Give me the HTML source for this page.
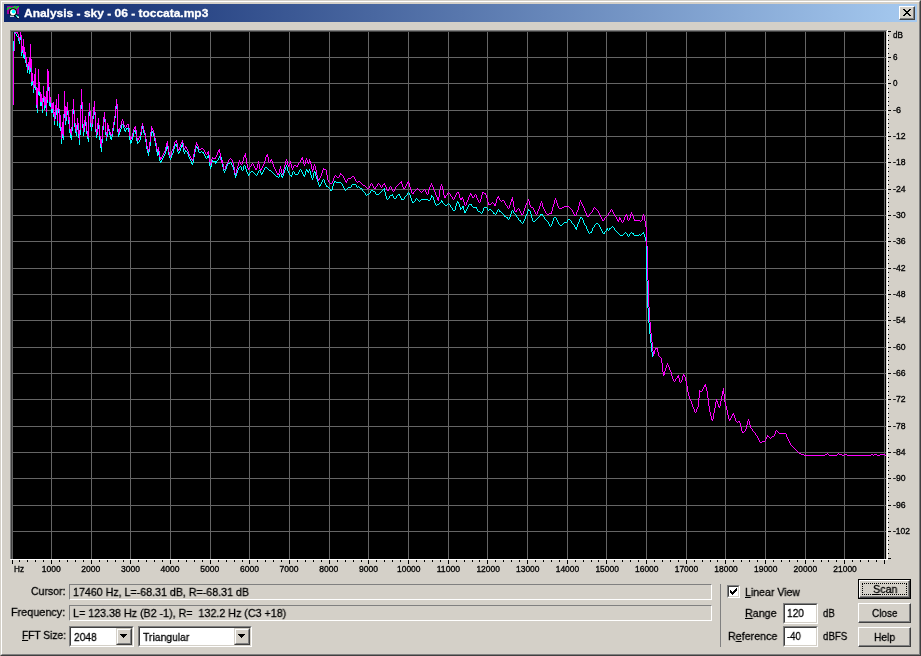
<!DOCTYPE html>
<html><head><meta charset="utf-8"><title>Analysis - sky - 06 - toccata.mp3</title>
<style>
html,body{margin:0;padding:0;}
body{width:921px;height:656px;overflow:hidden;background:#d4d0c8;font-family:"Liberation Sans",sans-serif;font-size:11px;color:#000;position:relative;}
.win{position:absolute;left:0;top:0;width:921px;height:656px;box-sizing:border-box;background:#d4d0c8;
 border-top:1px solid #d4d0c8;border-left:1px solid #d4d0c8;border-right:1px solid #404040;border-bottom:1px solid #404040;}
.win2{position:absolute;left:1px;top:1px;width:919px;height:654px;box-sizing:border-box;
 border-top:1px solid #fff;border-left:1px solid #fff;border-right:1px solid #808080;border-bottom:1px solid #808080;}
.title{position:absolute;left:4px;top:4px;width:913px;height:18px;background:linear-gradient(to right,#0a246a,#a6caf0);}
.title .txt{position:absolute;left:20px;top:2px;color:#fff;font-weight:bold;font-size:11px;line-height:14px;white-space:nowrap;letter-spacing:0.35px;}
.closeb{position:absolute;left:899px;top:6px;width:16px;height:14px;box-sizing:border-box;background:#d4d0c8;
 border-top:1px solid #fff;border-left:1px solid #fff;border-right:1px solid #404040;border-bottom:1px solid #404040;}
.closeb i{position:absolute;left:0;top:0;right:0;bottom:0;border-right:1px solid #808080;border-bottom:1px solid #808080;}
.chart{position:absolute;left:0;top:0;}
.lbl{position:absolute;white-space:nowrap;line-height:13px;height:13px;}
.field{position:absolute;box-sizing:border-box;border-top:1px solid #808080;border-left:1px solid #808080;border-right:1px solid #fff;border-bottom:1px solid #fff;white-space:pre;line-height:13px;padding:0 0 0 2px;}
.edit{position:absolute;box-sizing:border-box;background:#fff;border-top:1px solid #808080;border-left:1px solid #808080;border-right:1px solid #fff;border-bottom:1px solid #fff;}
.edit>b{position:absolute;left:0;top:0;right:0;bottom:0;border-top:1px solid #404040;border-left:1px solid #404040;border-right:1px solid #d4d0c8;border-bottom:1px solid #d4d0c8;font-weight:normal;}
.edit span{position:absolute;left:3px;top:3px;line-height:13px;white-space:nowrap;}
.btn{position:absolute;box-sizing:border-box;background:#d4d0c8;border-top:1px solid #fff;border-left:1px solid #fff;border-right:1px solid #404040;border-bottom:1px solid #404040;text-align:center;}
.btn>b{position:absolute;left:0;top:0;right:0;bottom:0;border-right:1px solid #808080;border-bottom:1px solid #808080;font-weight:normal;line-height:16px;}
.dd{position:absolute;top:1px;right:1px;width:16px;bottom:1px;box-sizing:border-box;background:#d4d0c8;border-top:1px solid #d4d0c8;border-left:1px solid #d4d0c8;border-right:1px solid #404040;border-bottom:1px solid #404040;}
.dd i{position:absolute;left:0;top:0;right:0;bottom:0;border-top:1px solid #fff;border-left:1px solid #fff;border-right:1px solid #808080;border-bottom:1px solid #808080;}
.dd svg{position:absolute;left:3px;top:5px;}
.t{will-change:transform;-webkit-text-stroke-width:0.3px;position:absolute;white-space:pre;font-size:11.5px;line-height:13px;height:13px;transform-origin:0 0;}
u{text-decoration:underline;}
</style></head><body>
<div class="win"></div><div class="win2"></div>
<div class="title">
 <svg style="position:absolute;left:2px;top:1px" width="16" height="16" viewBox="0 0 16 16">
  <rect x="1" y="1" width="12" height="8" fill="#a000a0" shape-rendering="crispEdges"/>
  <path d="M1.5 4.5v-1h1v-1h2v1h1v1h1.5 M6.5 3.5v-1h2v-1h1.5 M9 3.5h1.5v-1h1v-1h1" fill="none" stroke="#00e020" stroke-width="1" shape-rendering="crispEdges"/>
  <circle cx="7" cy="7.2" r="3.9" fill="#000"/>
  <circle cx="7" cy="7.2" r="2.9" fill="#fff"/>
  <circle cx="7.6" cy="6.6" r="1.9" fill="#00ffff"/>
  <path d="M9.6 10 L12.8 13.2" stroke="#000" stroke-width="2.6"/>
  <path d="M9.9 10.1 L12.6 12.8" stroke="#00ffff" stroke-width="1.3"/>
  <path d="M11.5 11.5 L12.8 12.8" stroke="#fff" stroke-width="1.3"/>
  <rect x="4" y="10.6" width="4" height="1.2" fill="#fff"/>
 </svg>
</div>
<div class="closeb"><i></i>
 <svg style="position:absolute;left:3px;top:2px" width="8" height="7" viewBox="0 0 8 7" shape-rendering="crispEdges"><path d="M0 0h2v1h-2zM6 0h2v1h-2zM1 1h2v1h-2zM5 1h2v1h-2zM2 2h4v1h-4zM3 3h2v1h-2zM2 4h4v1h-4zM1 5h2v1h-2zM5 5h2v1h-2zM0 6h2v1h-2zM6 6h2v1h-2z" fill="#000"/></svg>
</div>
<svg class="chart" style="will-change:transform" width="921" height="656" viewBox="0 0 921 656">
<g shape-rendering="crispEdges">
<rect x="10" y="30" width="878" height="530" fill="#fff"/>
<rect x="10" y="30" width="877" height="529" fill="#808080"/>
<rect x="11" y="31" width="876" height="528" fill="#d4d0c8"/>
<rect x="11" y="31" width="875" height="528" fill="#404040"/>
<rect x="12" y="32" width="874" height="527" fill="#000"/>
</g>
<g fill="#656565" shape-rendering="crispEdges">
<rect x="12" y="32" width="1" height="527"/>
<rect x="51" y="32" width="1" height="527"/>
<rect x="91" y="32" width="1" height="527"/>
<rect x="130" y="32" width="1" height="527"/>
<rect x="170" y="32" width="1" height="527"/>
<rect x="210" y="32" width="1" height="527"/>
<rect x="249" y="32" width="1" height="527"/>
<rect x="289" y="32" width="1" height="527"/>
<rect x="329" y="32" width="1" height="527"/>
<rect x="368" y="32" width="1" height="527"/>
<rect x="408" y="32" width="1" height="527"/>
<rect x="448" y="32" width="1" height="527"/>
<rect x="487" y="32" width="1" height="527"/>
<rect x="527" y="32" width="1" height="527"/>
<rect x="567" y="32" width="1" height="527"/>
<rect x="606" y="32" width="1" height="527"/>
<rect x="646" y="32" width="1" height="527"/>
<rect x="686" y="32" width="1" height="527"/>
<rect x="725" y="32" width="1" height="527"/>
<rect x="765" y="32" width="1" height="527"/>
<rect x="805" y="32" width="1" height="527"/>
<rect x="844" y="32" width="1" height="527"/>
<rect x="884" y="32" width="1" height="527"/>
<rect x="12" y="57" width="874" height="1"/>
<rect x="12" y="83" width="874" height="1"/>
<rect x="12" y="110" width="874" height="1"/>
<rect x="12" y="136" width="874" height="1"/>
<rect x="12" y="162" width="874" height="1"/>
<rect x="12" y="189" width="874" height="1"/>
<rect x="12" y="215" width="874" height="1"/>
<rect x="12" y="241" width="874" height="1"/>
<rect x="12" y="268" width="874" height="1"/>
<rect x="12" y="294" width="874" height="1"/>
<rect x="12" y="320" width="874" height="1"/>
<rect x="12" y="347" width="874" height="1"/>
<rect x="12" y="373" width="874" height="1"/>
<rect x="12" y="399" width="874" height="1"/>
<rect x="12" y="426" width="874" height="1"/>
<rect x="12" y="452" width="874" height="1"/>
<rect x="12" y="478" width="874" height="1"/>
<rect x="12" y="505" width="874" height="1"/>
<rect x="12" y="531" width="874" height="1"/>
</g>
<g shape-rendering="crispEdges">
<path fill="#00ffff" d="M13 41h1v11h-1zM14 32h1v9h-1zM15 33h1v1h-1zM16 34h1v2h-1zM17 36h1v1h-1zM18 37h1v4h-1zM19 40h1v4h-1zM20 35h1v5h-1zM21 38h1v18h-1zM22 49h1v4h-1zM23 44h1v14h-1zM24 51h1v8h-1zM25 56h1v7h-1zM26 61h1v6h-1zM27 67h1v6h-1zM28 65h1v5h-1zM29 61h1v13h-1zM30 47h1v25h-1zM31 63h1v23h-1zM32 77h1v8h-1zM33 85h1v8h-1zM34 78h1v10h-1zM35 72h1v18h-1zM36 90h1v18h-1zM37 91h1v22h-1zM38 73h1v22h-1zM39 86h1v10h-1zM40 96h1v10h-1zM41 99h1v7h-1zM42 102h1v11h-1zM43 91h1v11h-1zM44 100h1v10h-1zM45 101h1v7h-1zM46 95h1v21h-1zM47 74h1v29h-1zM48 75h1v16h-1zM49 91h1v15h-1zM50 101h1v6h-1zM51 107h1v6h-1zM52 108h1v5h-1zM53 106h1v11h-1zM54 116h1v9h-1zM55 108h1v11h-1zM56 103h1v12h-1zM57 112h1v14h-1zM58 98h1v15h-1zM59 113h1v15h-1zM60 119h1v12h-1zM61 131h1v13h-1zM62 127h1v11h-1zM63 118h1v22h-1zM64 95h1v23h-1zM65 110h1v15h-1zM66 112h1v9h-1zM67 107h1v8h-1zM68 115h1v9h-1zM69 121h1v12h-1zM70 133h1v5h-1zM71 131h1v9h-1zM72 113h1v18h-1zM73 104h1v10h-1zM74 114h1v13h-1zM75 127h1v6h-1zM76 130h1v6h-1zM77 123h1v7h-1zM78 127h1v11h-1zM79 135h1v10h-1zM80 109h1v26h-1zM81 93h1v16h-1zM82 106h1v22h-1zM83 128h1v8h-1zM84 124h1v8h-1zM85 120h1v6h-1zM86 126h1v8h-1zM87 134h1v5h-1zM88 116h1v26h-1zM89 107h1v9h-1zM90 115h1v12h-1zM91 127h1v4h-1zM92 119h1v8h-1zM93 110h1v9h-1zM94 105h1v10h-1zM95 115h1v17h-1zM96 132h1v6h-1zM97 127h1v8h-1zM98 122h1v7h-1zM99 129h1v11h-1zM100 140h1v8h-1zM101 143h1v9h-1zM102 130h1v13h-1zM103 120h1v10h-1zM104 116h1v6h-1zM105 122h1v13h-1zM106 135h1v6h-1zM107 127h1v10h-1zM108 129h1v2h-1zM109 131h1v4h-1zM110 135h1v4h-1zM111 137h1v3h-1zM112 131h1v6h-1zM113 125h1v6h-1zM114 118h1v7h-1zM115 109h1v9h-1zM116 103h1v6h-1zM117 107h1v25h-1zM118 132h1v5h-1zM119 132h1v3h-1zM120 129h1v3h-1zM121 125h1v4h-1zM122 124h1v1h-1zM123 125h1v3h-1zM124 128h1v3h-1zM125 130h1v2h-1zM126 128h1v2h-1zM127 128h1v1h-1zM128 128h1v4h-1zM129 132h1v8h-1zM130 140h1v4h-1zM131 140h1v3h-1zM132 137h1v3h-1zM133 132h1v5h-1zM134 130h1v2h-1zM135 129h1v5h-1zM136 133h1v8h-1zM137 141h1v3h-1zM138 142h1v1h-1zM139 140h1v2h-1zM140 135h1v5h-1zM141 129h1v6h-1zM142 126h1v3h-1zM143 129h1v4h-1zM144 133h1v2h-1zM145 135h1v7h-1zM146 142h1v7h-1zM147 149h1v4h-1zM148 152h1v4h-1zM149 146h1v6h-1zM150 136h1v10h-1zM151 130h1v6h-1zM152 131h1v2h-1zM153 133h1v3h-1zM154 136h1v5h-1zM155 141h1v5h-1zM156 146h1v6h-1zM157 152h1v4h-1zM158 151h1v4h-1zM159 155h1v6h-1zM160 161h1v2h-1zM161 160h1v2h-1zM162 158h1v2h-1zM163 156h1v2h-1zM164 154h1v2h-1zM165 151h1v3h-1zM166 147h1v4h-1zM167 144h1v5h-1zM168 149h1v6h-1zM169 155h1v3h-1zM170 158h1v2h-1zM171 155h1v3h-1zM172 153h1v2h-1zM173 149h1v4h-1zM174 146h1v3h-1zM175 144h1v2h-1zM176 144h1v3h-1zM177 147h1v5h-1zM178 152h1v2h-1zM179 151h1v2h-1zM180 148h1v3h-1zM181 145h1v3h-1zM182 143h1v4h-1zM183 147h1v5h-1zM184 152h1v2h-1zM185 150h1v2h-1zM186 151h1v1h-1zM187 152h1v2h-1zM188 154h1v3h-1zM189 157h1v2h-1zM190 159h1v2h-1zM191 161h1v3h-1zM192 163h1v2h-1zM193 157h1v6h-1zM194 152h1v5h-1zM195 148h1v4h-1zM196 146h1v2h-1zM197 147h1v2h-1zM198 149h1v3h-1zM199 152h1v1h-1zM200 152h1v1h-1zM201 151h1v1h-1zM202 152h1v1h-1zM203 152h1v2h-1zM204 154h1v2h-1zM205 156h1v2h-1zM206 158h1v1h-1zM207 156h1v2h-1zM208 155h1v3h-1zM209 158h1v8h-1zM210 166h1v3h-1zM211 162h1v5h-1zM212 160h1v2h-1zM213 161h1v1h-1zM214 161h1v1h-1zM215 161h1v3h-1zM216 161h1v2h-1zM217 160h1v1h-1zM218 158h1v2h-1zM219 156h1v2h-1zM220 155h1v2h-1zM221 157h1v5h-1zM222 162h1v5h-1zM223 167h1v4h-1zM224 171h1v2h-1zM225 169h1v2h-1zM226 166h1v3h-1zM227 164h1v2h-1zM228 163h1v1h-1zM229 163h1v1h-1zM230 162h1v1h-1zM231 163h1v2h-1zM232 165h1v2h-1zM233 167h1v3h-1zM234 170h1v5h-1zM235 175h1v3h-1zM236 173h1v3h-1zM237 170h1v3h-1zM238 168h1v2h-1zM239 167h1v1h-1zM240 166h1v1h-1zM241 167h1v3h-1zM242 170h1v1h-1zM243 166h1v4h-1zM244 165h1v1h-1zM245 166h1v3h-1zM246 169h1v3h-1zM247 172h1v2h-1zM248 174h1v2h-1zM249 173h1v2h-1zM250 172h1v1h-1zM251 171h1v1h-1zM252 171h1v1h-1zM253 172h1v1h-1zM254 173h1v1h-1zM255 174h1v1h-1zM256 175h1v1h-1zM257 173h1v2h-1zM258 171h1v2h-1zM259 170h1v1h-1zM260 171h1v2h-1zM261 173h1v2h-1zM262 172h1v2h-1zM263 170h1v2h-1zM264 168h1v2h-1zM265 167h1v1h-1zM266 167h1v1h-1zM267 168h1v1h-1zM268 169h1v1h-1zM269 170h1v1h-1zM270 170h1v1h-1zM271 171h1v1h-1zM272 172h1v1h-1zM273 173h1v1h-1zM274 174h1v1h-1zM275 175h1v1h-1zM276 176h1v1h-1zM277 176h1v1h-1zM278 177h1v1h-1zM279 174h1v3h-1zM280 173h1v1h-1zM281 174h1v3h-1zM282 176h1v2h-1zM283 173h1v3h-1zM284 170h1v3h-1zM285 167h1v3h-1zM286 165h1v2h-1zM287 167h1v4h-1zM288 171h1v2h-1zM289 173h1v2h-1zM290 175h1v1h-1zM291 175h1v2h-1zM292 172h1v3h-1zM293 171h1v1h-1zM294 172h1v2h-1zM295 174h1v1h-1zM296 174h1v1h-1zM297 174h1v1h-1zM298 172h1v2h-1zM299 170h1v2h-1zM300 169h1v1h-1zM301 170h1v2h-1zM302 172h1v2h-1zM303 174h1v2h-1zM304 175h1v2h-1zM305 171h1v4h-1zM306 169h1v2h-1zM307 170h1v2h-1zM308 171h1v2h-1zM309 169h1v2h-1zM310 171h1v4h-1zM311 175h1v3h-1zM312 178h1v2h-1zM313 173h1v5h-1zM314 171h1v2h-1zM315 172h1v4h-1zM316 176h1v3h-1zM317 179h1v3h-1zM318 182h1v3h-1zM319 185h1v2h-1zM320 184h1v2h-1zM321 182h1v2h-1zM322 180h1v2h-1zM323 179h1v1h-1zM324 180h1v3h-1zM325 183h1v2h-1zM326 185h1v2h-1zM327 186h1v1h-1zM328 187h1v1h-1zM329 188h1v1h-1zM330 189h1v2h-1zM331 190h1v1h-1zM332 186h1v4h-1zM333 183h1v3h-1zM334 181h1v2h-1zM335 181h1v1h-1zM336 182h1v1h-1zM337 182h1v1h-1zM338 182h1v1h-1zM339 182h1v1h-1zM340 182h1v1h-1zM341 183h1v1h-1zM342 184h1v2h-1zM343 186h1v2h-1zM344 188h1v2h-1zM345 190h1v1h-1zM346 189h1v1h-1zM347 188h1v1h-1zM348 187h1v1h-1zM349 187h1v1h-1zM350 187h1v1h-1zM351 185h1v2h-1zM352 184h1v1h-1zM353 184h1v1h-1zM354 184h1v1h-1zM355 184h1v1h-1zM356 185h1v2h-1zM357 187h1v1h-1zM358 186h1v1h-1zM359 187h1v1h-1zM360 188h1v1h-1zM361 188h1v1h-1zM362 189h1v2h-1zM363 191h1v1h-1zM364 192h1v1h-1zM365 193h1v2h-1zM366 195h1v1h-1zM367 194h1v1h-1zM368 194h1v1h-1zM369 193h1v1h-1zM370 191h1v2h-1zM371 190h1v1h-1zM372 190h1v1h-1zM373 191h1v1h-1zM374 191h1v1h-1zM375 192h1v2h-1zM376 194h1v1h-1zM377 194h1v1h-1zM378 194h1v1h-1zM379 193h1v1h-1zM380 192h1v1h-1zM381 191h1v1h-1zM382 190h1v1h-1zM383 189h1v1h-1zM384 188h1v4h-1zM385 192h1v4h-1zM386 196h1v3h-1zM387 199h1v1h-1zM388 198h1v1h-1zM389 196h1v2h-1zM390 195h1v1h-1zM391 195h1v1h-1zM392 194h1v2h-1zM393 196h1v2h-1zM394 198h1v1h-1zM395 198h1v1h-1zM396 196h1v2h-1zM397 195h1v1h-1zM398 194h1v1h-1zM399 194h1v2h-1zM400 196h1v2h-1zM401 198h1v2h-1zM402 199h1v1h-1zM403 199h1v1h-1zM404 197h1v2h-1zM405 196h1v1h-1zM406 195h1v1h-1zM407 193h1v2h-1zM408 192h1v1h-1zM409 193h1v2h-1zM410 195h1v3h-1zM411 198h1v3h-1zM412 201h1v2h-1zM413 202h1v1h-1zM414 201h1v1h-1zM415 199h1v2h-1zM416 198h1v1h-1zM417 199h1v1h-1zM418 200h1v1h-1zM419 201h1v1h-1zM420 200h1v1h-1zM421 199h1v1h-1zM422 199h1v1h-1zM423 199h1v1h-1zM424 199h1v1h-1zM425 199h1v1h-1zM426 199h1v1h-1zM427 199h1v1h-1zM428 200h1v1h-1zM429 200h1v1h-1zM430 198h1v2h-1zM431 195h1v3h-1zM432 196h1v1h-1zM433 197h1v3h-1zM434 200h1v3h-1zM435 203h1v2h-1zM436 205h1v1h-1zM437 204h1v1h-1zM438 204h1v1h-1zM439 203h1v1h-1zM440 202h1v1h-1zM441 200h1v2h-1zM442 201h1v2h-1zM443 203h1v1h-1zM444 204h1v1h-1zM445 205h1v1h-1zM446 205h1v1h-1zM447 204h1v1h-1zM448 203h1v1h-1zM449 204h1v1h-1zM450 205h1v2h-1zM451 207h1v1h-1zM452 208h1v2h-1zM453 210h1v1h-1zM454 210h1v1h-1zM455 206h1v4h-1zM456 203h1v3h-1zM457 201h1v2h-1zM458 202h1v2h-1zM459 204h1v3h-1zM460 207h1v3h-1zM461 208h1v1h-1zM462 206h1v2h-1zM463 206h1v4h-1zM464 210h1v3h-1zM465 211h1v2h-1zM466 209h1v2h-1zM467 207h1v2h-1zM468 205h1v2h-1zM469 204h1v1h-1zM470 204h1v1h-1zM471 204h1v2h-1zM472 206h1v1h-1zM473 207h1v1h-1zM474 207h1v1h-1zM475 207h1v1h-1zM476 207h1v2h-1zM477 209h1v2h-1zM478 211h1v1h-1zM479 211h1v1h-1zM480 212h1v1h-1zM481 213h1v1h-1zM482 211h1v2h-1zM483 208h1v3h-1zM484 207h1v1h-1zM485 207h1v1h-1zM486 207h1v1h-1zM487 208h1v2h-1zM488 210h1v1h-1zM489 209h1v1h-1zM490 209h1v1h-1zM491 210h1v1h-1zM492 211h1v1h-1zM493 212h1v2h-1zM494 213h1v1h-1zM495 214h1v1h-1zM496 212h1v2h-1zM497 210h1v2h-1zM498 209h1v1h-1zM499 210h1v2h-1zM500 211h1v1h-1zM501 212h1v1h-1zM502 213h1v1h-1zM503 214h1v1h-1zM504 215h1v2h-1zM505 216h1v1h-1zM506 217h1v1h-1zM507 217h1v2h-1zM508 219h1v1h-1zM509 217h1v2h-1zM510 214h1v3h-1zM511 211h1v3h-1zM512 210h1v1h-1zM513 211h1v2h-1zM514 213h1v1h-1zM515 214h1v1h-1zM516 215h1v2h-1zM517 217h1v1h-1zM518 218h1v2h-1zM519 220h1v1h-1zM520 220h1v2h-1zM521 222h1v1h-1zM522 223h1v1h-1zM523 221h1v2h-1zM524 219h1v2h-1zM525 216h1v3h-1zM526 214h1v2h-1zM527 211h1v3h-1zM528 209h1v2h-1zM529 210h1v1h-1zM530 211h1v3h-1zM531 214h1v4h-1zM532 218h1v3h-1zM533 221h1v1h-1zM534 221h1v1h-1zM535 220h1v1h-1zM536 219h1v1h-1zM537 218h1v1h-1zM538 217h1v1h-1zM539 216h1v1h-1zM540 214h1v2h-1zM541 214h1v1h-1zM542 214h1v2h-1zM543 216h1v1h-1zM544 217h1v2h-1zM545 219h1v1h-1zM546 220h1v1h-1zM547 221h1v1h-1zM548 222h1v2h-1zM549 224h1v2h-1zM550 226h1v1h-1zM551 224h1v2h-1zM552 221h1v3h-1zM553 218h1v3h-1zM554 217h1v1h-1zM555 217h1v1h-1zM556 218h1v2h-1zM557 220h1v2h-1zM558 222h1v2h-1zM559 224h1v1h-1zM560 225h1v1h-1zM561 225h1v1h-1zM562 224h1v1h-1zM563 223h1v1h-1zM564 222h1v1h-1zM565 222h1v1h-1zM566 222h1v1h-1zM567 220h1v2h-1zM568 219h1v1h-1zM569 219h1v1h-1zM570 220h1v1h-1zM571 221h1v2h-1zM572 223h1v1h-1zM573 224h1v1h-1zM574 225h1v2h-1zM575 227h1v2h-1zM576 227h1v3h-1zM577 224h1v3h-1zM578 222h1v2h-1zM579 219h1v3h-1zM580 217h1v2h-1zM581 217h1v1h-1zM582 218h1v2h-1zM583 220h1v3h-1zM584 223h1v2h-1zM585 225h1v1h-1zM586 226h1v3h-1zM587 229h1v2h-1zM588 231h1v2h-1zM589 233h1v1h-1zM590 232h1v1h-1zM591 231h1v2h-1zM592 228h1v3h-1zM593 227h1v1h-1zM594 225h1v2h-1zM595 224h1v1h-1zM596 223h1v1h-1zM597 223h1v1h-1zM598 224h1v1h-1zM599 225h1v2h-1zM600 227h1v2h-1zM601 229h1v2h-1zM602 231h1v2h-1zM603 233h1v1h-1zM604 232h1v2h-1zM605 231h1v1h-1zM606 229h1v2h-1zM607 228h1v2h-1zM608 230h1v1h-1zM609 228h1v2h-1zM610 228h1v1h-1zM611 227h1v1h-1zM612 226h1v1h-1zM613 227h1v1h-1zM614 228h1v2h-1zM615 230h1v1h-1zM616 231h1v1h-1zM617 232h1v1h-1zM618 233h1v1h-1zM619 234h1v1h-1zM620 235h1v1h-1zM621 235h1v1h-1zM622 235h1v1h-1zM623 234h1v1h-1zM624 233h1v1h-1zM625 232h1v1h-1zM626 233h1v1h-1zM627 234h1v2h-1zM628 236h1v1h-1zM629 234h1v2h-1zM630 233h1v1h-1zM631 232h1v1h-1zM632 233h1v1h-1zM633 233h1v2h-1zM634 235h1v1h-1zM635 235h1v1h-1zM636 235h1v1h-1zM637 235h1v1h-1zM638 235h1v1h-1zM639 234h1v1h-1zM640 235h1v1h-1zM641 234h1v1h-1zM642 233h1v1h-1zM643 232h1v2h-1zM644 234h1v3h-1zM645 237h1v4h-1zM646 231h1v50h-1zM647 281h1v27h-1zM648 308h1v15h-1zM649 323h1v11h-1zM650 334h1v9h-1zM651 343h1v9h-1zM652 352h1v5h-1z"/>
<path fill="#ff00ff" d="M13 51h1v54h-1zM14 33h1v18h-1zM15 32h1v1h-1zM16 32h1v1h-1zM17 32h1v2h-1zM18 34h1v4h-1zM19 37h1v4h-1zM20 32h1v5h-1zM21 35h1v17h-1zM22 46h1v4h-1zM23 39h1v15h-1zM24 47h1v8h-1zM25 52h1v8h-1zM26 57h1v7h-1zM27 64h1v6h-1zM28 62h1v4h-1zM29 57h1v13h-1zM30 44h1v24h-1zM31 59h1v23h-1zM32 73h1v8h-1zM33 81h1v8h-1zM34 74h1v11h-1zM35 68h1v19h-1zM36 87h1v18h-1zM37 88h1v21h-1zM38 69h1v22h-1zM39 82h1v10h-1zM40 92h1v10h-1zM41 94h1v8h-1zM42 98h1v11h-1zM43 86h1v12h-1zM44 96h1v10h-1zM45 97h1v8h-1zM46 91h1v21h-1zM47 69h1v31h-1zM48 71h1v16h-1zM49 87h1v15h-1zM50 97h1v6h-1zM51 103h1v6h-1zM52 103h1v6h-1zM53 102h1v12h-1zM54 112h1v9h-1zM55 105h1v11h-1zM56 99h1v11h-1zM57 108h1v13h-1zM58 94h1v15h-1zM59 109h1v14h-1zM60 115h1v12h-1zM61 127h1v12h-1zM62 122h1v12h-1zM63 114h1v22h-1zM64 91h1v23h-1zM65 106h1v15h-1zM66 107h1v10h-1zM67 102h1v9h-1zM68 111h1v9h-1zM69 117h1v12h-1zM70 129h1v4h-1zM71 127h1v8h-1zM72 109h1v18h-1zM73 99h1v11h-1zM74 110h1v13h-1zM75 123h1v6h-1zM76 125h1v7h-1zM77 118h1v7h-1zM78 123h1v11h-1zM79 130h1v10h-1zM80 105h1v25h-1zM81 89h1v16h-1zM82 102h1v22h-1zM83 124h1v8h-1zM84 120h1v8h-1zM85 116h1v6h-1zM86 122h1v9h-1zM87 131h1v5h-1zM88 112h1v26h-1zM89 103h1v9h-1zM90 111h1v12h-1zM91 123h1v4h-1zM92 116h1v8h-1zM93 107h1v9h-1zM94 101h1v11h-1zM95 112h1v17h-1zM96 129h1v6h-1zM97 123h1v9h-1zM98 118h1v7h-1zM99 125h1v11h-1zM100 136h1v8h-1zM101 139h1v8h-1zM102 126h1v13h-1zM103 117h1v9h-1zM104 112h1v7h-1zM105 119h1v13h-1zM106 132h1v6h-1zM107 123h1v11h-1zM108 125h1v4h-1zM109 129h1v3h-1zM110 132h1v3h-1zM111 134h1v2h-1zM112 128h1v6h-1zM113 122h1v6h-1zM114 116h1v6h-1zM115 106h1v10h-1zM116 99h1v7h-1zM117 104h1v25h-1zM118 129h1v5h-1zM119 128h1v4h-1zM120 125h1v3h-1zM121 121h1v4h-1zM122 119h1v2h-1zM123 121h1v4h-1zM124 125h1v2h-1zM125 127h1v1h-1zM126 125h1v2h-1zM127 124h1v1h-1zM128 124h1v4h-1zM129 128h1v8h-1zM130 136h1v4h-1zM131 137h1v2h-1zM132 133h1v4h-1zM133 129h1v4h-1zM134 127h1v2h-1zM135 126h1v5h-1zM136 130h1v8h-1zM137 138h1v3h-1zM138 138h1v2h-1zM139 136h1v2h-1zM140 132h1v4h-1zM141 126h1v6h-1zM142 123h1v3h-1zM143 126h1v4h-1zM144 130h1v3h-1zM145 133h1v6h-1zM146 139h1v7h-1zM147 146h1v4h-1zM148 149h1v3h-1zM149 142h1v7h-1zM150 132h1v10h-1zM151 126h1v6h-1zM152 128h1v2h-1zM153 130h1v3h-1zM154 133h1v5h-1zM155 138h1v5h-1zM156 143h1v6h-1zM157 149h1v3h-1zM158 147h1v4h-1zM159 151h1v6h-1zM160 157h1v3h-1zM161 157h1v2h-1zM162 155h1v2h-1zM163 153h1v2h-1zM164 151h1v2h-1zM165 147h1v4h-1zM166 143h1v4h-1zM167 141h1v5h-1zM168 146h1v6h-1zM169 152h1v4h-1zM170 155h1v2h-1zM171 151h1v4h-1zM172 149h1v2h-1zM173 146h1v3h-1zM174 142h1v4h-1zM175 141h1v1h-1zM176 140h1v3h-1zM177 143h1v6h-1zM178 149h1v2h-1zM179 147h1v3h-1zM180 144h1v3h-1zM181 142h1v2h-1zM182 140h1v3h-1zM183 143h1v5h-1zM184 148h1v2h-1zM185 146h1v2h-1zM186 147h1v2h-1zM187 149h1v2h-1zM188 151h1v3h-1zM189 154h1v2h-1zM190 156h1v2h-1zM191 158h1v2h-1zM192 159h1v2h-1zM193 154h1v5h-1zM194 149h1v5h-1zM195 145h1v4h-1zM196 142h1v3h-1zM197 144h1v2h-1zM198 146h1v3h-1zM199 149h1v1h-1zM200 149h1v1h-1zM201 148h1v1h-1zM202 148h1v1h-1zM203 149h1v1h-1zM204 150h1v2h-1zM205 152h1v2h-1zM206 154h1v1h-1zM207 152h1v2h-1zM208 151h1v4h-1zM209 155h1v7h-1zM210 162h1v3h-1zM211 159h1v4h-1zM212 157h1v2h-1zM213 158h1v1h-1zM214 158h1v1h-1zM215 157h1v2h-1zM216 155h1v2h-1zM217 152h1v3h-1zM218 150h1v2h-1zM219 149h1v4h-1zM220 153h1v7h-1zM221 160h1v3h-1zM222 160h1v4h-1zM223 164h1v5h-1zM224 169h1v1h-1zM225 166h1v3h-1zM226 164h1v2h-1zM227 162h1v2h-1zM228 160h1v2h-1zM229 159h1v1h-1zM230 158h1v1h-1zM231 159h1v1h-1zM232 160h1v3h-1zM233 163h1v4h-1zM234 167h1v6h-1zM235 173h1v2h-1zM236 169h1v4h-1zM237 166h1v3h-1zM238 162h1v4h-1zM239 160h1v2h-1zM240 162h1v2h-1zM241 164h1v1h-1zM242 161h1v3h-1zM243 157h1v4h-1zM244 155h1v2h-1zM245 153h1v5h-1zM246 158h1v6h-1zM247 164h1v4h-1zM248 168h1v2h-1zM249 167h1v2h-1zM250 166h1v1h-1zM251 164h1v2h-1zM252 163h1v1h-1zM253 164h1v2h-1zM254 166h1v2h-1zM255 168h1v2h-1zM256 168h1v2h-1zM257 164h1v4h-1zM258 161h1v3h-1zM259 164h1v5h-1zM260 169h1v2h-1zM261 168h1v2h-1zM262 166h1v2h-1zM263 164h1v2h-1zM264 161h1v3h-1zM265 157h1v4h-1zM266 155h1v2h-1zM267 154h1v3h-1zM268 157h1v5h-1zM269 162h1v1h-1zM270 160h1v2h-1zM271 159h1v2h-1zM272 161h1v3h-1zM273 164h1v3h-1zM274 167h1v2h-1zM275 169h1v2h-1zM276 171h1v2h-1zM277 173h1v2h-1zM278 173h1v2h-1zM279 169h1v4h-1zM280 166h1v3h-1zM281 169h1v4h-1zM282 173h1v2h-1zM283 169h1v4h-1zM284 165h1v4h-1zM285 161h1v4h-1zM286 159h1v2h-1zM287 161h1v4h-1zM288 165h1v2h-1zM289 163h1v3h-1zM290 161h1v3h-1zM291 164h1v4h-1zM292 168h1v2h-1zM293 166h1v2h-1zM294 165h1v1h-1zM295 165h1v1h-1zM296 166h1v1h-1zM297 165h1v2h-1zM298 163h1v2h-1zM299 162h1v1h-1zM300 160h1v2h-1zM301 158h1v2h-1zM302 157h1v3h-1zM303 160h1v4h-1zM304 164h1v2h-1zM305 160h1v4h-1zM306 158h1v2h-1zM307 160h1v3h-1zM308 162h1v2h-1zM309 159h1v3h-1zM310 161h1v3h-1zM311 164h1v5h-1zM312 169h1v3h-1zM313 166h1v4h-1zM314 164h1v2h-1zM315 166h1v4h-1zM316 170h1v5h-1zM317 175h1v4h-1zM318 179h1v2h-1zM319 178h1v2h-1zM320 176h1v2h-1zM321 173h1v3h-1zM322 170h1v3h-1zM323 168h1v2h-1zM324 169h1v1h-1zM325 169h1v1h-1zM326 170h1v5h-1zM327 175h1v5h-1zM328 180h1v2h-1zM329 182h1v1h-1zM330 183h1v1h-1zM331 183h1v1h-1zM332 181h1v2h-1zM333 178h1v3h-1zM334 176h1v2h-1zM335 175h1v1h-1zM336 176h1v1h-1zM337 177h1v1h-1zM338 177h1v1h-1zM339 175h1v2h-1zM340 173h1v2h-1zM341 174h1v1h-1zM342 175h1v1h-1zM343 176h1v2h-1zM344 178h1v2h-1zM345 180h1v2h-1zM346 181h1v2h-1zM347 179h1v2h-1zM348 178h1v1h-1zM349 178h1v1h-1zM350 178h1v1h-1zM351 177h1v1h-1zM352 176h1v1h-1zM353 176h1v1h-1zM354 177h1v2h-1zM355 179h1v2h-1zM356 181h1v1h-1zM357 182h1v1h-1zM358 181h1v1h-1zM359 181h1v1h-1zM360 182h1v1h-1zM361 183h1v1h-1zM362 184h1v1h-1zM363 185h1v1h-1zM364 185h1v1h-1zM365 186h1v1h-1zM366 187h1v1h-1zM367 188h1v1h-1zM368 188h1v1h-1zM369 186h1v2h-1zM370 184h1v2h-1zM371 183h1v1h-1zM372 184h1v2h-1zM373 186h1v2h-1zM374 188h1v1h-1zM375 187h1v2h-1zM376 186h1v1h-1zM377 184h1v2h-1zM378 183h1v1h-1zM379 184h1v1h-1zM380 185h1v2h-1zM381 187h1v1h-1zM382 185h1v2h-1zM383 184h1v1h-1zM384 183h1v2h-1zM385 185h1v2h-1zM386 187h1v3h-1zM387 190h1v1h-1zM388 189h1v2h-1zM389 187h1v2h-1zM390 186h1v1h-1zM391 187h1v2h-1zM392 189h1v2h-1zM393 191h1v1h-1zM394 189h1v2h-1zM395 187h1v2h-1zM396 186h1v1h-1zM397 185h1v1h-1zM398 184h1v1h-1zM399 183h1v1h-1zM400 182h1v1h-1zM401 181h1v3h-1zM402 184h1v3h-1zM403 187h1v2h-1zM404 188h1v1h-1zM405 186h1v2h-1zM406 184h1v2h-1zM407 182h1v2h-1zM408 181h1v2h-1zM409 183h1v4h-1zM410 187h1v3h-1zM411 190h1v3h-1zM412 193h1v1h-1zM413 192h1v2h-1zM414 191h1v1h-1zM415 190h1v1h-1zM416 189h1v1h-1zM417 188h1v1h-1zM418 189h1v1h-1zM419 190h1v1h-1zM420 191h1v1h-1zM421 192h1v1h-1zM422 191h1v1h-1zM423 190h1v1h-1zM424 189h1v1h-1zM425 190h1v2h-1zM426 192h1v2h-1zM427 194h1v1h-1zM428 190h1v4h-1zM429 187h1v3h-1zM430 185h1v2h-1zM431 183h1v2h-1zM432 185h1v2h-1zM433 187h1v3h-1zM434 190h1v2h-1zM435 192h1v3h-1zM436 195h1v2h-1zM437 197h1v3h-1zM438 197h1v4h-1zM439 190h1v7h-1zM440 186h1v4h-1zM441 184h1v2h-1zM442 186h1v4h-1zM443 190h1v5h-1zM444 195h1v3h-1zM445 196h1v2h-1zM446 195h1v1h-1zM447 193h1v2h-1zM448 192h1v1h-1zM449 193h1v1h-1zM450 194h1v2h-1zM451 196h1v1h-1zM452 197h1v2h-1zM453 199h1v1h-1zM454 197h1v2h-1zM455 195h1v2h-1zM456 193h1v2h-1zM457 192h1v1h-1zM458 192h1v2h-1zM459 194h1v4h-1zM460 198h1v2h-1zM461 198h1v2h-1zM462 197h1v2h-1zM463 199h1v3h-1zM464 202h1v3h-1zM465 205h1v1h-1zM466 202h1v3h-1zM467 200h1v2h-1zM468 197h1v3h-1zM469 195h1v2h-1zM470 193h1v2h-1zM471 194h1v2h-1zM472 196h1v2h-1zM473 197h1v1h-1zM474 195h1v2h-1zM475 194h1v1h-1zM476 195h1v3h-1zM477 198h1v2h-1zM478 200h1v2h-1zM479 202h1v1h-1zM480 199h1v3h-1zM481 195h1v4h-1zM482 192h1v3h-1zM483 192h1v1h-1zM484 193h1v1h-1zM485 193h1v2h-1zM486 195h1v3h-1zM487 198h1v4h-1zM488 202h1v3h-1zM489 204h1v1h-1zM490 204h1v1h-1zM491 203h1v1h-1zM492 202h1v1h-1zM493 203h1v1h-1zM494 204h1v2h-1zM495 203h1v3h-1zM496 199h1v4h-1zM497 197h1v2h-1zM498 196h1v2h-1zM499 198h1v2h-1zM500 200h1v1h-1zM501 201h1v1h-1zM502 200h1v1h-1zM503 200h1v1h-1zM504 201h1v2h-1zM505 203h1v2h-1zM506 205h1v1h-1zM507 206h1v2h-1zM508 208h1v1h-1zM509 205h1v3h-1zM510 202h1v3h-1zM511 199h1v3h-1zM512 197h1v4h-1zM513 201h1v6h-1zM514 207h1v4h-1zM515 211h1v1h-1zM516 210h1v2h-1zM517 209h1v1h-1zM518 208h1v1h-1zM519 209h1v2h-1zM520 211h1v2h-1zM521 213h1v2h-1zM522 214h1v1h-1zM523 211h1v3h-1zM524 208h1v3h-1zM525 205h1v3h-1zM526 203h1v2h-1zM527 201h1v2h-1zM528 199h1v2h-1zM529 201h1v4h-1zM530 205h1v2h-1zM531 207h1v1h-1zM532 207h1v1h-1zM533 208h1v2h-1zM534 210h1v2h-1zM535 212h1v2h-1zM536 214h1v1h-1zM537 211h1v3h-1zM538 209h1v2h-1zM539 206h1v3h-1zM540 203h1v3h-1zM541 201h1v2h-1zM542 203h1v4h-1zM543 207h1v2h-1zM544 209h1v2h-1zM545 211h1v2h-1zM546 213h1v1h-1zM547 214h1v1h-1zM548 214h1v1h-1zM549 213h1v1h-1zM550 213h1v1h-1zM551 211h1v3h-1zM552 207h1v4h-1zM553 204h1v3h-1zM554 200h1v4h-1zM555 198h1v2h-1zM556 200h1v3h-1zM557 203h1v3h-1zM558 206h1v2h-1zM559 208h1v1h-1zM560 208h1v1h-1zM561 208h1v1h-1zM562 207h1v1h-1zM563 207h1v1h-1zM564 206h1v1h-1zM565 206h1v1h-1zM566 206h1v1h-1zM567 206h1v1h-1zM568 206h1v1h-1zM569 207h1v1h-1zM570 208h1v1h-1zM571 209h1v1h-1zM572 210h1v2h-1zM573 212h1v2h-1zM574 214h1v2h-1zM575 215h1v1h-1zM576 212h1v3h-1zM577 210h1v2h-1zM578 206h1v4h-1zM579 202h1v4h-1zM580 200h1v2h-1zM581 202h1v2h-1zM582 204h1v2h-1zM583 206h1v2h-1zM584 208h1v3h-1zM585 211h1v2h-1zM586 213h1v3h-1zM587 216h1v1h-1zM588 216h1v1h-1zM589 214h1v2h-1zM590 213h1v1h-1zM591 212h1v1h-1zM592 210h1v2h-1zM593 208h1v2h-1zM594 207h1v1h-1zM595 208h1v1h-1zM596 209h1v1h-1zM597 210h1v1h-1zM598 211h1v2h-1zM599 213h1v2h-1zM600 215h1v2h-1zM601 217h1v2h-1zM602 219h1v2h-1zM603 220h1v1h-1zM604 218h1v2h-1zM605 217h1v1h-1zM606 216h1v1h-1zM607 215h1v1h-1zM608 213h1v2h-1zM609 212h1v1h-1zM610 210h1v2h-1zM611 209h1v1h-1zM612 210h1v2h-1zM613 212h1v2h-1zM614 214h1v2h-1zM615 216h1v1h-1zM616 217h1v2h-1zM617 219h1v2h-1zM618 220h1v2h-1zM619 217h1v3h-1zM620 218h1v2h-1zM621 220h1v2h-1zM622 222h1v1h-1zM623 220h1v2h-1zM624 217h1v3h-1zM625 215h1v2h-1zM626 214h1v2h-1zM627 216h1v4h-1zM628 220h1v1h-1zM629 218h1v2h-1zM630 214h1v4h-1zM631 212h1v2h-1zM632 214h1v2h-1zM633 216h1v3h-1zM634 219h1v2h-1zM635 220h1v1h-1zM636 220h1v1h-1zM637 220h1v1h-1zM638 220h1v1h-1zM639 220h1v1h-1zM640 221h1v1h-1zM641 220h1v1h-1zM642 216h1v4h-1zM643 214h1v2h-1zM644 216h1v5h-1zM645 221h1v6h-1zM646 227h1v19h-1zM647 246h1v34h-1zM648 280h1v27h-1zM649 307h1v15h-1zM650 322h1v11h-1zM651 333h1v9h-1zM652 342h1v9h-1zM653 351h1v5h-1zM654 350h1v4h-1zM655 348h1v2h-1zM656 348h1v1h-1zM657 348h1v4h-1zM658 352h1v4h-1zM659 356h1v1h-1zM660 357h1v1h-1zM661 358h1v5h-1zM662 363h1v9h-1zM663 372h1v4h-1zM664 371h1v4h-1zM665 368h1v3h-1zM666 365h1v3h-1zM667 363h1v2h-1zM668 365h1v2h-1zM669 367h1v3h-1zM670 370h1v2h-1zM671 372h1v4h-1zM672 376h1v3h-1zM673 379h1v2h-1zM674 381h1v1h-1zM675 379h1v2h-1zM676 378h1v1h-1zM677 376h1v2h-1zM678 375h1v3h-1zM679 378h1v4h-1zM680 382h1v1h-1zM681 380h1v2h-1zM682 376h1v4h-1zM683 374h1v2h-1zM684 375h1v2h-1zM685 377h1v4h-1zM686 381h1v5h-1zM687 386h1v6h-1zM688 392h1v4h-1zM689 396h1v3h-1zM690 399h1v2h-1zM691 401h1v3h-1zM692 404h1v3h-1zM693 407h1v2h-1zM694 409h1v3h-1zM695 412h1v1h-1zM696 409h1v3h-1zM697 407h1v2h-1zM698 398h1v9h-1zM699 390h1v8h-1zM700 391h1v1h-1zM701 391h1v1h-1zM702 389h1v2h-1zM703 387h1v2h-1zM704 385h1v2h-1zM705 384h1v3h-1zM706 387h1v4h-1zM707 391h1v7h-1zM708 398h1v8h-1zM709 406h1v6h-1zM710 412h1v4h-1zM711 416h1v4h-1zM712 419h1v2h-1zM713 413h1v6h-1zM714 408h1v5h-1zM715 402h1v6h-1zM716 399h1v3h-1zM717 401h1v3h-1zM718 404h1v3h-1zM719 406h1v2h-1zM720 401h1v5h-1zM721 396h1v5h-1zM722 391h1v5h-1zM723 388h1v6h-1zM724 394h1v8h-1zM725 402h1v4h-1zM726 406h1v4h-1zM727 410h1v5h-1zM728 415h1v4h-1zM729 419h1v2h-1zM730 418h1v2h-1zM731 416h1v2h-1zM732 414h1v2h-1zM733 413h1v2h-1zM734 415h1v3h-1zM735 418h1v3h-1zM736 421h1v1h-1zM737 422h1v1h-1zM738 421h1v1h-1zM739 421h1v2h-1zM740 423h1v4h-1zM741 427h1v4h-1zM742 431h1v2h-1zM743 432h1v1h-1zM744 431h1v1h-1zM745 429h1v2h-1zM746 425h1v4h-1zM747 421h1v4h-1zM748 419h1v2h-1zM749 421h1v4h-1zM750 425h1v3h-1zM751 428h1v1h-1zM752 429h1v2h-1zM753 431h1v1h-1zM754 432h1v1h-1zM755 433h1v2h-1zM756 435h1v1h-1zM757 436h1v2h-1zM758 438h1v2h-1zM759 440h1v2h-1zM760 442h1v1h-1zM761 442h1v1h-1zM762 441h1v1h-1zM763 441h1v1h-1zM764 441h1v1h-1zM765 439h1v2h-1zM766 437h1v2h-1zM767 435h1v2h-1zM768 436h1v1h-1zM769 437h1v1h-1zM770 438h1v1h-1zM771 437h1v1h-1zM772 436h1v1h-1zM773 436h1v1h-1zM774 434h1v2h-1zM775 431h1v3h-1zM776 430h1v1h-1zM777 431h1v1h-1zM778 432h1v1h-1zM779 433h1v1h-1zM780 433h1v1h-1zM781 433h1v1h-1zM782 433h1v1h-1zM783 433h1v1h-1zM784 433h1v1h-1zM785 433h1v1h-1zM786 434h1v3h-1zM787 437h1v2h-1zM788 439h1v2h-1zM789 441h1v2h-1zM790 443h1v2h-1zM791 445h1v1h-1zM792 446h1v1h-1zM793 447h1v1h-1zM794 448h1v1h-1zM795 449h1v1h-1zM796 450h1v1h-1zM797 451h1v1h-1zM798 452h1v1h-1zM799 453h1v1h-1zM800 453h1v1h-1zM801 454h1v1h-1zM802 454h1v1h-1zM803 454h1v1h-1zM804 455h1v1h-1zM805 455h1v1h-1zM806 455h1v1h-1zM807 455h1v1h-1zM808 455h1v1h-1zM809 455h1v1h-1zM810 455h1v1h-1zM811 455h1v1h-1zM812 455h1v1h-1zM813 455h1v1h-1zM814 455h1v1h-1zM815 455h1v1h-1zM816 455h1v1h-1zM817 455h1v1h-1zM818 455h1v1h-1zM819 455h1v1h-1zM820 455h1v1h-1zM821 455h1v1h-1zM822 455h1v1h-1zM823 455h1v1h-1zM824 455h1v1h-1zM825 454h1v1h-1zM826 454h1v1h-1zM827 453h1v1h-1zM828 454h1v1h-1zM829 455h1v1h-1zM830 455h1v1h-1zM831 455h1v1h-1zM832 455h1v1h-1zM833 455h1v1h-1zM834 455h1v1h-1zM835 455h1v1h-1zM836 455h1v1h-1zM837 454h1v1h-1zM838 453h1v1h-1zM839 454h1v1h-1zM840 454h1v1h-1zM841 454h1v1h-1zM842 455h1v1h-1zM843 455h1v1h-1zM844 454h1v1h-1zM845 454h1v1h-1zM846 454h1v1h-1zM847 455h1v1h-1zM848 455h1v1h-1zM849 455h1v1h-1zM850 455h1v1h-1zM851 455h1v1h-1zM852 455h1v1h-1zM853 455h1v1h-1zM854 455h1v1h-1zM855 455h1v1h-1zM856 455h1v1h-1zM857 455h1v1h-1zM858 455h1v1h-1zM859 455h1v1h-1zM860 455h1v1h-1zM861 455h1v1h-1zM862 455h1v1h-1zM863 455h1v1h-1zM864 455h1v1h-1zM865 455h1v1h-1zM866 455h1v1h-1zM867 455h1v1h-1zM868 455h1v1h-1zM869 455h1v1h-1zM870 455h1v1h-1zM871 454h1v1h-1zM872 454h1v1h-1zM873 455h1v1h-1zM874 454h1v1h-1zM875 454h1v1h-1zM876 454h1v1h-1zM877 455h1v1h-1zM878 455h1v1h-1zM879 455h1v1h-1zM880 454h1v1h-1zM881 454h1v1h-1zM882 454h1v1h-1zM883 454h1v1h-1zM884 454h1v1h-1zM885 455h1v1h-1z"/>
</g>
<g fill="#000" shape-rendering="crispEdges">
<rect x="12" y="560" width="1" height="4"/>
<rect x="19" y="560" width="1" height="2"/>
<rect x="27" y="560" width="1" height="2"/>
<rect x="35" y="560" width="1" height="2"/>
<rect x="43" y="560" width="1" height="2"/>
<rect x="51" y="560" width="1" height="4"/>
<rect x="59" y="560" width="1" height="2"/>
<rect x="67" y="560" width="1" height="2"/>
<rect x="75" y="560" width="1" height="2"/>
<rect x="83" y="560" width="1" height="2"/>
<rect x="91" y="560" width="1" height="4"/>
<rect x="99" y="560" width="1" height="2"/>
<rect x="107" y="560" width="1" height="2"/>
<rect x="115" y="560" width="1" height="2"/>
<rect x="123" y="560" width="1" height="2"/>
<rect x="130" y="560" width="1" height="4"/>
<rect x="138" y="560" width="1" height="2"/>
<rect x="146" y="560" width="1" height="2"/>
<rect x="154" y="560" width="1" height="2"/>
<rect x="162" y="560" width="1" height="2"/>
<rect x="170" y="560" width="1" height="4"/>
<rect x="178" y="560" width="1" height="2"/>
<rect x="186" y="560" width="1" height="2"/>
<rect x="194" y="560" width="1" height="2"/>
<rect x="202" y="560" width="1" height="2"/>
<rect x="210" y="560" width="1" height="4"/>
<rect x="218" y="560" width="1" height="2"/>
<rect x="226" y="560" width="1" height="2"/>
<rect x="234" y="560" width="1" height="2"/>
<rect x="242" y="560" width="1" height="2"/>
<rect x="249" y="560" width="1" height="4"/>
<rect x="257" y="560" width="1" height="2"/>
<rect x="265" y="560" width="1" height="2"/>
<rect x="273" y="560" width="1" height="2"/>
<rect x="281" y="560" width="1" height="2"/>
<rect x="289" y="560" width="1" height="4"/>
<rect x="297" y="560" width="1" height="2"/>
<rect x="305" y="560" width="1" height="2"/>
<rect x="313" y="560" width="1" height="2"/>
<rect x="321" y="560" width="1" height="2"/>
<rect x="329" y="560" width="1" height="4"/>
<rect x="337" y="560" width="1" height="2"/>
<rect x="345" y="560" width="1" height="2"/>
<rect x="353" y="560" width="1" height="2"/>
<rect x="361" y="560" width="1" height="2"/>
<rect x="368" y="560" width="1" height="4"/>
<rect x="376" y="560" width="1" height="2"/>
<rect x="384" y="560" width="1" height="2"/>
<rect x="392" y="560" width="1" height="2"/>
<rect x="400" y="560" width="1" height="2"/>
<rect x="408" y="560" width="1" height="4"/>
<rect x="416" y="560" width="1" height="2"/>
<rect x="424" y="560" width="1" height="2"/>
<rect x="432" y="560" width="1" height="2"/>
<rect x="440" y="560" width="1" height="2"/>
<rect x="448" y="560" width="1" height="4"/>
<rect x="456" y="560" width="1" height="2"/>
<rect x="464" y="560" width="1" height="2"/>
<rect x="472" y="560" width="1" height="2"/>
<rect x="479" y="560" width="1" height="2"/>
<rect x="487" y="560" width="1" height="4"/>
<rect x="495" y="560" width="1" height="2"/>
<rect x="503" y="560" width="1" height="2"/>
<rect x="511" y="560" width="1" height="2"/>
<rect x="519" y="560" width="1" height="2"/>
<rect x="527" y="560" width="1" height="4"/>
<rect x="535" y="560" width="1" height="2"/>
<rect x="543" y="560" width="1" height="2"/>
<rect x="551" y="560" width="1" height="2"/>
<rect x="559" y="560" width="1" height="2"/>
<rect x="567" y="560" width="1" height="4"/>
<rect x="575" y="560" width="1" height="2"/>
<rect x="583" y="560" width="1" height="2"/>
<rect x="591" y="560" width="1" height="2"/>
<rect x="598" y="560" width="1" height="2"/>
<rect x="606" y="560" width="1" height="4"/>
<rect x="614" y="560" width="1" height="2"/>
<rect x="622" y="560" width="1" height="2"/>
<rect x="630" y="560" width="1" height="2"/>
<rect x="638" y="560" width="1" height="2"/>
<rect x="646" y="560" width="1" height="4"/>
<rect x="654" y="560" width="1" height="2"/>
<rect x="662" y="560" width="1" height="2"/>
<rect x="670" y="560" width="1" height="2"/>
<rect x="678" y="560" width="1" height="2"/>
<rect x="686" y="560" width="1" height="4"/>
<rect x="694" y="560" width="1" height="2"/>
<rect x="702" y="560" width="1" height="2"/>
<rect x="710" y="560" width="1" height="2"/>
<rect x="717" y="560" width="1" height="2"/>
<rect x="725" y="560" width="1" height="4"/>
<rect x="733" y="560" width="1" height="2"/>
<rect x="741" y="560" width="1" height="2"/>
<rect x="749" y="560" width="1" height="2"/>
<rect x="757" y="560" width="1" height="2"/>
<rect x="765" y="560" width="1" height="4"/>
<rect x="773" y="560" width="1" height="2"/>
<rect x="781" y="560" width="1" height="2"/>
<rect x="789" y="560" width="1" height="2"/>
<rect x="797" y="560" width="1" height="2"/>
<rect x="805" y="560" width="1" height="4"/>
<rect x="813" y="560" width="1" height="2"/>
<rect x="821" y="560" width="1" height="2"/>
<rect x="828" y="560" width="1" height="2"/>
<rect x="836" y="560" width="1" height="2"/>
<rect x="844" y="560" width="1" height="4"/>
<rect x="852" y="560" width="1" height="2"/>
<rect x="860" y="560" width="1" height="2"/>
<rect x="868" y="560" width="1" height="2"/>
<rect x="876" y="560" width="1" height="2"/>
<rect x="884" y="560" width="1" height="4"/>
<rect x="888" y="35" width="1" height="1"/>
<rect x="888" y="40" width="1" height="1"/>
<rect x="888" y="44" width="1" height="1"/>
<rect x="888" y="48" width="1" height="1"/>
<rect x="888" y="53" width="1" height="1"/>
<rect x="888" y="57" width="3" height="1"/>
<rect x="888" y="61" width="1" height="1"/>
<rect x="888" y="66" width="1" height="1"/>
<rect x="888" y="70" width="1" height="1"/>
<rect x="888" y="75" width="1" height="1"/>
<rect x="888" y="79" width="1" height="1"/>
<rect x="888" y="83" width="3" height="1"/>
<rect x="888" y="88" width="1" height="1"/>
<rect x="888" y="92" width="1" height="1"/>
<rect x="888" y="97" width="1" height="1"/>
<rect x="888" y="101" width="1" height="1"/>
<rect x="888" y="105" width="1" height="1"/>
<rect x="888" y="110" width="3" height="1"/>
<rect x="888" y="114" width="1" height="1"/>
<rect x="888" y="119" width="1" height="1"/>
<rect x="888" y="123" width="1" height="1"/>
<rect x="888" y="127" width="1" height="1"/>
<rect x="888" y="132" width="1" height="1"/>
<rect x="888" y="136" width="3" height="1"/>
<rect x="888" y="140" width="1" height="1"/>
<rect x="888" y="145" width="1" height="1"/>
<rect x="888" y="149" width="1" height="1"/>
<rect x="888" y="154" width="1" height="1"/>
<rect x="888" y="158" width="1" height="1"/>
<rect x="888" y="162" width="3" height="1"/>
<rect x="888" y="167" width="1" height="1"/>
<rect x="888" y="171" width="1" height="1"/>
<rect x="888" y="176" width="1" height="1"/>
<rect x="888" y="180" width="1" height="1"/>
<rect x="888" y="184" width="1" height="1"/>
<rect x="888" y="189" width="3" height="1"/>
<rect x="888" y="193" width="1" height="1"/>
<rect x="888" y="198" width="1" height="1"/>
<rect x="888" y="202" width="1" height="1"/>
<rect x="888" y="206" width="1" height="1"/>
<rect x="888" y="211" width="1" height="1"/>
<rect x="888" y="215" width="3" height="1"/>
<rect x="888" y="219" width="1" height="1"/>
<rect x="888" y="224" width="1" height="1"/>
<rect x="888" y="228" width="1" height="1"/>
<rect x="888" y="233" width="1" height="1"/>
<rect x="888" y="237" width="1" height="1"/>
<rect x="888" y="241" width="3" height="1"/>
<rect x="888" y="246" width="1" height="1"/>
<rect x="888" y="250" width="1" height="1"/>
<rect x="888" y="255" width="1" height="1"/>
<rect x="888" y="259" width="1" height="1"/>
<rect x="888" y="263" width="1" height="1"/>
<rect x="888" y="268" width="3" height="1"/>
<rect x="888" y="272" width="1" height="1"/>
<rect x="888" y="277" width="1" height="1"/>
<rect x="888" y="281" width="1" height="1"/>
<rect x="888" y="285" width="1" height="1"/>
<rect x="888" y="290" width="1" height="1"/>
<rect x="888" y="294" width="3" height="1"/>
<rect x="888" y="299" width="1" height="1"/>
<rect x="888" y="303" width="1" height="1"/>
<rect x="888" y="307" width="1" height="1"/>
<rect x="888" y="312" width="1" height="1"/>
<rect x="888" y="316" width="1" height="1"/>
<rect x="888" y="320" width="3" height="1"/>
<rect x="888" y="325" width="1" height="1"/>
<rect x="888" y="329" width="1" height="1"/>
<rect x="888" y="334" width="1" height="1"/>
<rect x="888" y="338" width="1" height="1"/>
<rect x="888" y="342" width="1" height="1"/>
<rect x="888" y="347" width="3" height="1"/>
<rect x="888" y="351" width="1" height="1"/>
<rect x="888" y="356" width="1" height="1"/>
<rect x="888" y="360" width="1" height="1"/>
<rect x="888" y="364" width="1" height="1"/>
<rect x="888" y="369" width="1" height="1"/>
<rect x="888" y="373" width="3" height="1"/>
<rect x="888" y="378" width="1" height="1"/>
<rect x="888" y="382" width="1" height="1"/>
<rect x="888" y="386" width="1" height="1"/>
<rect x="888" y="391" width="1" height="1"/>
<rect x="888" y="395" width="1" height="1"/>
<rect x="888" y="399" width="3" height="1"/>
<rect x="888" y="404" width="1" height="1"/>
<rect x="888" y="408" width="1" height="1"/>
<rect x="888" y="413" width="1" height="1"/>
<rect x="888" y="417" width="1" height="1"/>
<rect x="888" y="421" width="1" height="1"/>
<rect x="888" y="426" width="3" height="1"/>
<rect x="888" y="430" width="1" height="1"/>
<rect x="888" y="435" width="1" height="1"/>
<rect x="888" y="439" width="1" height="1"/>
<rect x="888" y="443" width="1" height="1"/>
<rect x="888" y="448" width="1" height="1"/>
<rect x="888" y="452" width="3" height="1"/>
<rect x="888" y="457" width="1" height="1"/>
<rect x="888" y="461" width="1" height="1"/>
<rect x="888" y="465" width="1" height="1"/>
<rect x="888" y="470" width="1" height="1"/>
<rect x="888" y="474" width="1" height="1"/>
<rect x="888" y="478" width="3" height="1"/>
<rect x="888" y="483" width="1" height="1"/>
<rect x="888" y="487" width="1" height="1"/>
<rect x="888" y="492" width="1" height="1"/>
<rect x="888" y="496" width="1" height="1"/>
<rect x="888" y="500" width="1" height="1"/>
<rect x="888" y="505" width="3" height="1"/>
<rect x="888" y="509" width="1" height="1"/>
<rect x="888" y="514" width="1" height="1"/>
<rect x="888" y="518" width="1" height="1"/>
<rect x="888" y="522" width="1" height="1"/>
<rect x="888" y="527" width="1" height="1"/>
<rect x="888" y="531" width="3" height="1"/>
<rect x="888" y="536" width="1" height="1"/>
<rect x="888" y="540" width="1" height="1"/>
<rect x="888" y="544" width="1" height="1"/>
<rect x="888" y="549" width="1" height="1"/>
<rect x="888" y="553" width="1" height="1"/>
<rect x="888" y="558" width="3" height="1"/>
<rect x="888" y="31" width="3" height="1"/>
</g>
<g font-family="'Liberation Sans', sans-serif" font-size="9.9" fill="#000" stroke="#000" stroke-width="0.35">
<text x="14" y="572" textLength="10" lengthAdjust="spacingAndGlyphs">Hz</text>
<text x="41.7" y="572" textLength="19" lengthAdjust="spacingAndGlyphs">1000</text>
<text x="81.3" y="572" textLength="19" lengthAdjust="spacingAndGlyphs">2000</text>
<text x="121.0" y="572" textLength="19" lengthAdjust="spacingAndGlyphs">3000</text>
<text x="160.6" y="572" textLength="19" lengthAdjust="spacingAndGlyphs">4000</text>
<text x="200.3" y="572" textLength="19" lengthAdjust="spacingAndGlyphs">5000</text>
<text x="240.0" y="572" textLength="19" lengthAdjust="spacingAndGlyphs">6000</text>
<text x="279.6" y="572" textLength="19" lengthAdjust="spacingAndGlyphs">7000</text>
<text x="319.3" y="572" textLength="19" lengthAdjust="spacingAndGlyphs">8000</text>
<text x="358.9" y="572" textLength="19" lengthAdjust="spacingAndGlyphs">9000</text>
<text x="397.0" y="572" textLength="23.5" lengthAdjust="spacingAndGlyphs">10000</text>
<text x="436.7" y="572" textLength="23.5" lengthAdjust="spacingAndGlyphs">11000</text>
<text x="476.4" y="572" textLength="23.5" lengthAdjust="spacingAndGlyphs">12000</text>
<text x="516.0" y="572" textLength="23.5" lengthAdjust="spacingAndGlyphs">13000</text>
<text x="555.7" y="572" textLength="23.5" lengthAdjust="spacingAndGlyphs">14000</text>
<text x="595.4" y="572" textLength="23.5" lengthAdjust="spacingAndGlyphs">15000</text>
<text x="635.0" y="572" textLength="23.5" lengthAdjust="spacingAndGlyphs">16000</text>
<text x="674.7" y="572" textLength="23.5" lengthAdjust="spacingAndGlyphs">17000</text>
<text x="714.3" y="572" textLength="23.5" lengthAdjust="spacingAndGlyphs">18000</text>
<text x="754.0" y="572" textLength="23.5" lengthAdjust="spacingAndGlyphs">19000</text>
<text x="793.6" y="572" textLength="23.5" lengthAdjust="spacingAndGlyphs">20000</text>
<text x="833.3" y="572" textLength="23.5" lengthAdjust="spacingAndGlyphs">21000</text>
<text x="893" y="38" textLength="10" lengthAdjust="spacingAndGlyphs">dB</text>
<text x="893" y="60" textLength="4.5" lengthAdjust="spacingAndGlyphs">6</text>
<text x="893" y="86" textLength="4.5" lengthAdjust="spacingAndGlyphs">0</text>
<text x="893" y="113" textLength="8" lengthAdjust="spacingAndGlyphs">-6</text>
<text x="893" y="139" textLength="12.5" lengthAdjust="spacingAndGlyphs">-12</text>
<text x="893" y="165" textLength="12.5" lengthAdjust="spacingAndGlyphs">-18</text>
<text x="893" y="192" textLength="12.5" lengthAdjust="spacingAndGlyphs">-24</text>
<text x="893" y="218" textLength="12.5" lengthAdjust="spacingAndGlyphs">-30</text>
<text x="893" y="244" textLength="12.5" lengthAdjust="spacingAndGlyphs">-36</text>
<text x="893" y="271" textLength="12.5" lengthAdjust="spacingAndGlyphs">-42</text>
<text x="893" y="297" textLength="12.5" lengthAdjust="spacingAndGlyphs">-48</text>
<text x="893" y="323" textLength="12.5" lengthAdjust="spacingAndGlyphs">-54</text>
<text x="893" y="350" textLength="12.5" lengthAdjust="spacingAndGlyphs">-60</text>
<text x="893" y="376" textLength="12.5" lengthAdjust="spacingAndGlyphs">-66</text>
<text x="893" y="402" textLength="12.5" lengthAdjust="spacingAndGlyphs">-72</text>
<text x="893" y="429" textLength="12.5" lengthAdjust="spacingAndGlyphs">-78</text>
<text x="893" y="455" textLength="12.5" lengthAdjust="spacingAndGlyphs">-84</text>
<text x="893" y="481" textLength="12.5" lengthAdjust="spacingAndGlyphs">-90</text>
<text x="893" y="508" textLength="12.5" lengthAdjust="spacingAndGlyphs">-96</text>
<text x="893" y="534" textLength="17" lengthAdjust="spacingAndGlyphs">-102</text>
</g>
</svg>
<div class="field" style="left:69px;top:584px;width:643px;height:16px;"></div>
<div class="field" style="left:69px;top:605px;width:643px;height:16px;"></div>
<div class="edit" style="left:69px;top:626px;width:65px;height:21px;"><b></b><div class="dd"><i></i><svg width="7" height="4" viewBox="0 0 7 4" shape-rendering="crispEdges"><path d="M0 0h7v1h-7zM1 1h5v1h-5zM2 2h3v1h-3zM3 3h1v1h-1z" fill="#000"/></svg></div></div>
<div class="edit" style="left:138px;top:626px;width:114px;height:21px;"><b></b><div class="dd"><i></i><svg width="7" height="4" viewBox="0 0 7 4" shape-rendering="crispEdges"><path d="M0 0h7v1h-7zM1 1h5v1h-5zM2 2h3v1h-3zM3 3h1v1h-1z" fill="#000"/></svg></div></div>
<div style="position:absolute;left:720px;top:584px;width:1px;height:63px;background:#808080;"></div>
<div class="edit" style="left:727px;top:585px;width:13px;height:13px;"><b></b><svg style="position:absolute;left:2px;top:2px" width="7" height="7" viewBox="0 0 7 7" shape-rendering="crispEdges"><path d="M0 2h1v1h1v1h1v-1h1v-1h1v-1h1v-1h1v3h-1v1h-1v1h-1v1h-1v1h-1v-1h-1v-1h-1z" fill="#000"/></svg></div>
<div class="edit" style="left:783px;top:603px;width:35px;height:21px;"><b></b></div>
<div class="edit" style="left:783px;top:626px;width:35px;height:21px;"><b></b></div>
<div style="position:absolute;left:858px;top:579px;width:53px;height:20px;background:#000;"></div>
<div class="btn" style="left:859px;top:580px;width:51px;height:18px;"><b></b><div style="position:absolute;left:2px;top:2px;width:43px;height:10px;border:1px dotted #000;"></div></div>
<div class="btn" style="left:858px;top:603px;width:53px;height:20px;"><b></b></div>
<div class="btn" style="left:858px;top:627px;width:53px;height:20px;"><b></b></div>
<span class="t" id="cur" style="left:31.0px;top:585.4px;transform:scaleX(0.9150);">Cursor:</span>
<span class="t" id="frq" style="left:11.3px;top:606.4px;transform:scaleX(0.9421);">Frequency:</span>
<span class="t" id="fft" style="left:22.0px;top:629.4px;transform:scaleX(0.8864);"><u>F</u>FT Size:</span>
<span class="t" id="curv" style="left:73.0px;top:586.4px;transform:scaleX(0.9268);">17460 Hz, L=-68.31 dB, R=-68.31 dB</span>
<span class="t" id="frqv" style="left:73.0px;top:607.4px;transform:scaleX(0.9307);">L= 123.38 Hz (B2 -1), R=  132.2 Hz (C3 +18)</span>
<span class="t" id="c1" style="left:74.0px;top:631.4px;transform:scaleX(0.8869);">2048</span>
<span class="t" id="c2" style="left:143.0px;top:631.4px;transform:scaleX(0.9034);">Triangular</span>
<span class="t" id="lin" style="left:745.4px;top:586.4px;transform:scaleX(0.9181);"><u>L</u>inear View</span>
<span class="t" id="rng" style="left:745.4px;top:607.4px;transform:scaleX(0.9320);"><u>R</u>ange</span>
<span class="t" id="ref" style="left:727.7px;top:630.4px;transform:scaleX(0.9288);">R<u>e</u>ference</span>
<span class="t" id="e1" style="left:787.2px;top:607.4px;transform:scaleX(0.8808);">120</span>
<span class="t" id="e2" style="left:787.2px;top:630.4px;transform:scaleX(0.8301);">-40</span>
<span class="t" id="db" style="left:822.9px;top:607.4px;transform:scaleX(0.8240);">dB</span>
<span class="t" id="dbfs" style="left:822.9px;top:630.4px;transform:scaleX(0.8448);">dBFS</span>
<span class="t" id="scan" style="left:872.8px;top:583.4px;transform:scaleX(0.9344);"><u>S</u>can</span>
<span class="t" id="close" style="left:871.8px;top:607.4px;transform:scaleX(0.8672);">Close</span>
<span class="t" id="help" style="left:873.9px;top:631.4px;transform:scaleX(0.8919);">Help</span>
<span class="t" id="ttl" style="left:24.0px;top:7.4px;transform:scaleX(1.0409);color:#fff;font-weight:bold;">Analysis - sky - 06 - toccata.mp3</span>
</body></html>
